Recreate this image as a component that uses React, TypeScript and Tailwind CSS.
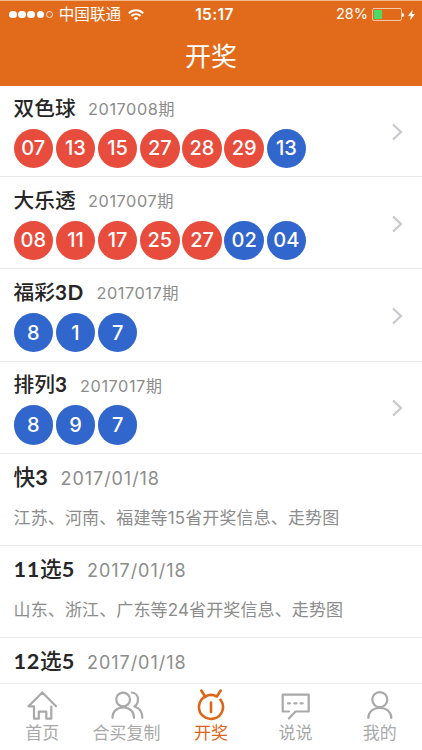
import type { ReactNode } from "react";

type Draw = {
  name: string;
  issue?: string;
  date?: string;
  red?: string[];
  blue?: string[];
  note?: string;
};

const DRAWS: Draw[] = [
  { name: "双色球", issue: "2017008期", red: ["07", "13", "15", "27", "28", "29"], blue: ["13"] },
  { name: "大乐透", issue: "2017007期", red: ["08", "11", "17", "25", "27"], blue: ["02", "04"] },
  { name: "福彩3D", issue: "2017017期", blue: ["8", "1", "7"] },
  { name: "排列3", issue: "2017017期", blue: ["8", "9", "7"] },
  { name: "快3", date: "2017/01/18", note: "江苏、河南、福建等15省开奖信息、走势图" },
  { name: "11选5", date: "2017/01/18", note: "山东、浙江、广东等24省开奖信息、走势图" },
  { name: "12选5", date: "2017/01/18" },
];

const TABS: { label: string; icon: ReactNode; active?: boolean }[] = [
  {
    label: "首页",
    icon: <path d="M31 17.300 17.300 3.500 3.500 17.300h5.500v12.400h4.800v-7h7.500v7h5V17.500" />,
  },
  {
    label: "合买复制",
    icon: (
      <>
        <circle cx="13.100" cy="10.500" r="6.900" />
        <path d="M2.500 28.800c0-6 4-10.300 10.700-10.300S24 22.800 24 28.800" />
        <path d="M21.800 3.500c3.700.3 6.200 3.300 6.200 7 0 3.300-1.300 5.500-3.600 7 5 1.500 8 5.700 8 11.300" />
      </>
    ),
  },
  {
    label: "开奖",
    active: true,
    icon: (
      <>
        <path d="M26.500 10.700A12 12 0 1 1 22.800 7.500l3.900-6" />
        <path d="M17 13.500v9.500M7.300 1.500l4 6.300" />
      </>
    ),
  },
  {
    label: "说说",
    icon: (
      <>
        <path d="M11 22.500H4.700V5.700h26v16.800H17.500l-6.700 7" />
        <path d="M10 14.300h2M16.300 14.300h2.200M22.600 14.300h2" />
      </>
    ),
  },
  {
    label: "我的",
    icon: (
      <>
        <circle cx="16.800" cy="10.600" r="7.500" />
        <path d="M5.300 29c0-6 4.500-10 11.500-10s11.500 4 11.500 10" />
      </>
    ),
  },
];

function StatusBar() {
  return (
    <div className="flex h-[27px] items-center justify-between pr-[7px] pl-[9px] text-[15px] leading-none">
      <div className="flex flex-1 items-center">
        <div className="flex gap-[1.700px]">
          {[0, 1, 2, 3].map((i) => (
            <span key={i} className="h-[7.500px] w-[7.500px] rounded-full bg-white" />
          ))}
          <span className="h-[7.500px] w-[7.500px] rounded-full border border-white/80" />
        </div>
        <span className="ml-[5.500px] text-[15.600px]">中国联通</span>
        <svg className="ml-[7px] h-[12px] w-[16px]" viewBox="0 0 16 12" fill="none" stroke="white" strokeWidth="1.900">
          <path d="M.8 4.300a10.200 10.200 0 0 1 14.400 0M3.400 7a6.500 6.500 0 0 1 9.200 0" />
          <path d="M8 11.600 5.600 9.200a3.400 3.400 0 0 1 4.800 0z" fill="white" stroke="none" />
        </svg>
      </div>
      <span className="mr-[-5px] text-[15.500px] font-semibold tracking-[0.400px]">15:17</span>
      <div className="flex flex-1 items-center justify-end">
        <span className="text-[14.500px]">28%</span>
        <div className="ml-[4px] h-[13px] w-[30px] rounded-[2px] border border-[#f6c9a4] p-px">
          <div className="h-full w-[7.500px] bg-[#4cd964]" />
        </div>
        <span className="h-[4px] w-[2px] rounded-r-full bg-white" />
        <svg className="ml-[4px] h-[12px] w-[7px]" viewBox="0 0 8 12" fill="white">
          <path d="M5.300 0 0 6.800h3.200L2.500 12 8 4.900H4.700z" />
        </svg>
      </div>
    </div>
  );
}

function Ball({ value, color }: { value: string; color: string }) {
  return (
    <span
      className={`flex h-[39.500px] w-[39.500px] items-center justify-center rounded-full text-[20px] font-medium text-white ${color}`}
    >
      {value}
    </span>
  );
}

// Latin letters and digits sit a little wider than the Chinese part of the name
function DrawName({ name, large }: { name: string; large: boolean }) {
  return (
    <h2
      className={`pb-[2px] font-['Noto_Sans_CJK_SC',sans-serif] leading-[21px] font-medium text-[#262626] ${
        large ? "text-[21.700px]" : "text-[20.700px]"
      }`}
    >
      {name.split(/([0-9A-Z]+)/).map((part, i) =>
        /[0-9A-Z]/.test(part) ? (
          <span key={i} className="font-['Lato',sans-serif] font-bold tracking-[0.700px]">
            {part}
          </span>
        ) : (
          part
        ),
      )}
    </h2>
  );
}

function DrawRow({ draw }: { draw: Draw }) {
  const hasBalls = Boolean(draw.blue);

  return (
    <li className="flex h-[92.200px] shrink-0 items-center border-b border-[#e9e9eb] pr-[19.500px] pl-[13.500px]">
      <div className="h-full flex-1">
        <div className="flex h-[43.500px] items-center pt-[4px]">
          <DrawName name={draw.name} large={!hasBalls} />
          {draw.issue && (
            <span className="ml-[12.500px] pt-[1px] text-[16.300px] leading-none tracking-[0.550px] text-[#8c8c8c]">
              {draw.issue}
            </span>
          )}
          {draw.date && (
            <span className="ml-[12px] pt-[2px] text-[18px] leading-none tracking-[0.950px] text-[#8c8c8c]">
              {draw.date}
            </span>
          )}
        </div>
        {draw.note && (
          <p className="mt-[12.500px] text-[17px] leading-[17px] tracking-[0.130px] text-[#8c8c8c]">{draw.note}</p>
        )}
        {hasBalls && (
          <div className="flex gap-[2.700px]">
            {draw.red?.map((n) => <Ball key={n} value={n} color="bg-[#e74c3c]" />)}
            {draw.blue?.map((n) => <Ball key={n} value={n} color="bg-[#3166cd]" />)}
          </div>
        )}
      </div>
      {hasBalls && (
        <svg className="mt-[2px] h-[18px] w-[12px]" viewBox="0 0 12 18" fill="none" stroke="#c7c7cc" strokeWidth="2.200">
          <path d="m2 1.500 8 7.500-8 7.500" />
        </svg>
      )}
    </li>
  );
}

export default function App() {
  return (
    <div className="flex h-[750px] w-[422px] flex-col overflow-hidden bg-white font-['Inter','Noto_Sans_CJK_SC',sans-serif]">
      <header className="h-[86px] shrink-0 border-t border-[#f3b98c] bg-[#e16b1a] text-white">
        <StatusBar />
        <h1 className="mt-[16px] text-center text-[26px] leading-[26px]">开奖</h1>
      </header>

      <ul className="-mt-[1px] flex min-h-0 flex-1 flex-col overflow-hidden">
        {DRAWS.map((draw) => (
          <DrawRow key={draw.name} draw={draw} />
        ))}
      </ul>

      <nav className="flex h-[67px] shrink-0 border-t border-[#ededed] bg-white">
        {TABS.map((tab) => (
          <div
            key={tab.label}
            className={`flex flex-1 flex-col items-center pt-[5px] ${tab.active ? "text-[#dd6519]" : "text-[#a9a9a9]"}`}
          >
            <svg
              className="h-[34px] w-[34px]"
              viewBox="0 0 34 34"
              fill="none"
              stroke="currentColor"
              strokeWidth={tab.active ? 2.6 : 2.2}
              strokeLinecap="round"
              strokeLinejoin="round"
            >
              {tab.icon}
            </svg>
            <span className="mt-[2px] text-[17px] leading-[17px]">{tab.label}</span>
          </div>
        ))}
      </nav>
    </div>
  );
}
